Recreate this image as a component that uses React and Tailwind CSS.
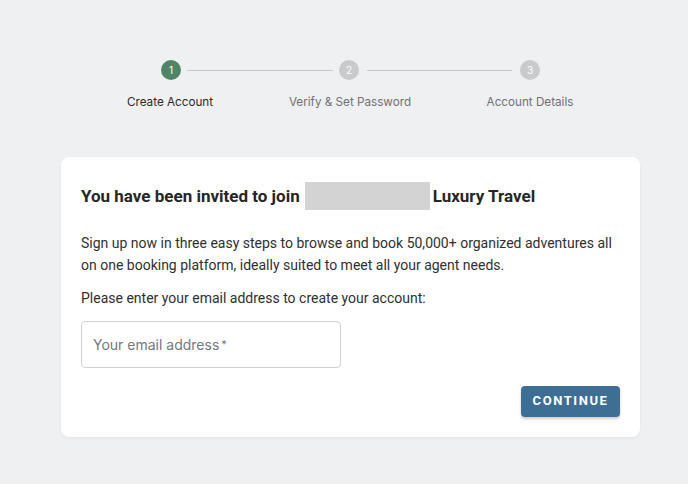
import React from 'react';

const steps = ['Create Account', 'Verify & Set Password', 'Account Details'];

const Circle = ({ n, active }) => (
  <div
    className={`w-5 h-5 rounded-full flex items-center justify-center text-[10px] text-white ${
      active ? 'bg-[#4f8467]' : 'bg-[#c9cacc]'
    }`}
  >
    {n}
  </div>
);

export default function App() {
  return (
    <div
      className="w-[688px] h-[484px] bg-[#eff0f2] overflow-hidden"
      style={{ fontFamily: 'Roboto, "Liberation Sans", sans-serif' }}
    >
      <div className="pt-[60px] font-['Inter',sans-serif]">
        <div className="flex items-center ml-[161px]">
          <Circle n={1} active />
          <div className="mx-1.5 w-[146px] h-px bg-[#c6c7ca]" />
          <Circle n={2} />
          <div className="mx-2 w-[145px] h-px bg-[#c6c7ca]" />
          <Circle n={3} />
        </div>
        <div className="grid grid-cols-3 w-[540px] ml-[80px] mt-[14px] text-[11.7px]">
          {steps.map((s, i) => (
            <div key={s} className={`text-center ${i === 0 ? 'text-[#2b2b2b]' : 'text-[#6e7176]'}`}>
              {s}
            </div>
          ))}
        </div>
      </div>

      <div className="mt-[45px] ml-[61px] w-[579px] bg-white rounded-lg shadow-[0_1px_3px_rgba(0,0,0,0.06)] px-5 pt-[25px] pb-5">
        <h1 className="flex items-center text-[17px] font-bold text-[#262626] leading-7">
          You have been invited to join
          <span className="inline-block w-[125px] h-[28px] bg-[#d3d3d3] ml-[5px] mr-[3px]" />
          Luxury Travel
        </h1>
        <p className="mt-[22px] text-[14px] leading-[22px] text-[#2f2f2f]">
          Sign up now in three easy steps to browse and book 50,000+ organized adventures all on one booking platform, ideally suited to meet all your agent needs.
        </p>
        <p className="mt-[11px] text-[14px] leading-[22px] text-[#2f2f2f]">
          Please enter your email address to create your account:
        </p>
        <div className="mt-[12px] w-[260px] h-[47px] border border-[#cfd1d5] rounded flex items-center px-[11px] text-[14px] text-[#74777f] font-['Inter',sans-serif]">
          Your email address<span className="ml-[2px] text-[11px]">*</span>
        </div>
        <div className="flex justify-end mt-[18px]">
          <button className="w-[99px] h-[31px] rounded bg-[#3d6f95] text-white text-[13px] font-bold tracking-[0.12em] shadow-[0_2px_3px_rgba(0,0,0,0.2)]">
            CONTINUE
          </button>
        </div>
      </div>
    </div>
  );
}
